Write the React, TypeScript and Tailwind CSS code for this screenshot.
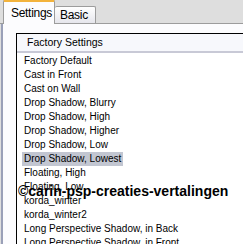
const items = [
  "Factory Default",
  "Cast in Front",
  "Cast on Wall",
  "Drop Shadow, Blurry",
  "Drop Shadow, High",
  "Drop Shadow, Higher",
  "Drop Shadow, Low",
  "Drop Shadow, Lowest",
  "Floating, High",
  "Floating, Low",
  "korda_winter",
  "korda_winter2",
  "Long Perspective Shadow, in Back",
  "Long Perspective Shadow, in Front",
];

export default function App() {
  return (
    <div className="relative w-[243px] h-[244px] overflow-hidden bg-[#dedede] font-['Liberation_Sans',Arial,sans-serif] text-black">
      {/* tabs */}
      <div className="flex items-end h-[24px] pl-[3px] border-b border-[#9c9c9c]">
        <div className="relative z-10 -mb-px h-[25px] w-[52px] rounded-t-[3px] border-t-[3px] border-x border-t-[#f3b33c] border-x-[#9c9c9c] bg-[#fcfcfe] pl-[7px] pt-[2px] text-[12px] tracking-[-0.3px]">
          Settings
        </div>
        <div className="h-[17px] w-[41px] rounded-t-[2px] border-t border-r border-[#9c9c9c] bg-gradient-to-b from-[#ffffff] to-[#e6e6ec] pl-[5px] pt-[1px] text-[12px] leading-[15px] tracking-[-0.3px]">
          Basic
        </div>
      </div>

      {/* panel */}
      <div className="ml-[1px] h-[220px] border-l-2 border-[#9aa0b8] bg-[#fcfcfe] pl-[13px] pt-[9px]">
        <div className="h-full border-l border-t border-black bg-white">
          <div className="flex h-[19px] items-center border-b-2 border-[#c8c9d6] bg-[#f7f8fc] pl-[10px] text-[10.5px]">
            Factory Settings
          </div>
          <div className="pt-px pl-[5px] text-[10px] leading-[14px]">
            {items.map((t) => (
              <div key={t} className="h-[14px] whitespace-nowrap">
                <span
                  className={
                    t === "Drop Shadow, Lowest"
                      ? "inline-block h-[14px] bg-[#c2c6d1] px-[2px]"
                      : "inline-block h-[14px] px-[2px]"
                  }
                >
                  {t}
                </span>
              </div>
            ))}
          </div>
        </div>
      </div>

      {/* watermark */}
      <div className="absolute left-[18px] top-[182px] whitespace-nowrap text-[14px] font-bold leading-[18px]">
        ©carin-psp-creaties-vertalingen
      </div>
    </div>
  );
}
